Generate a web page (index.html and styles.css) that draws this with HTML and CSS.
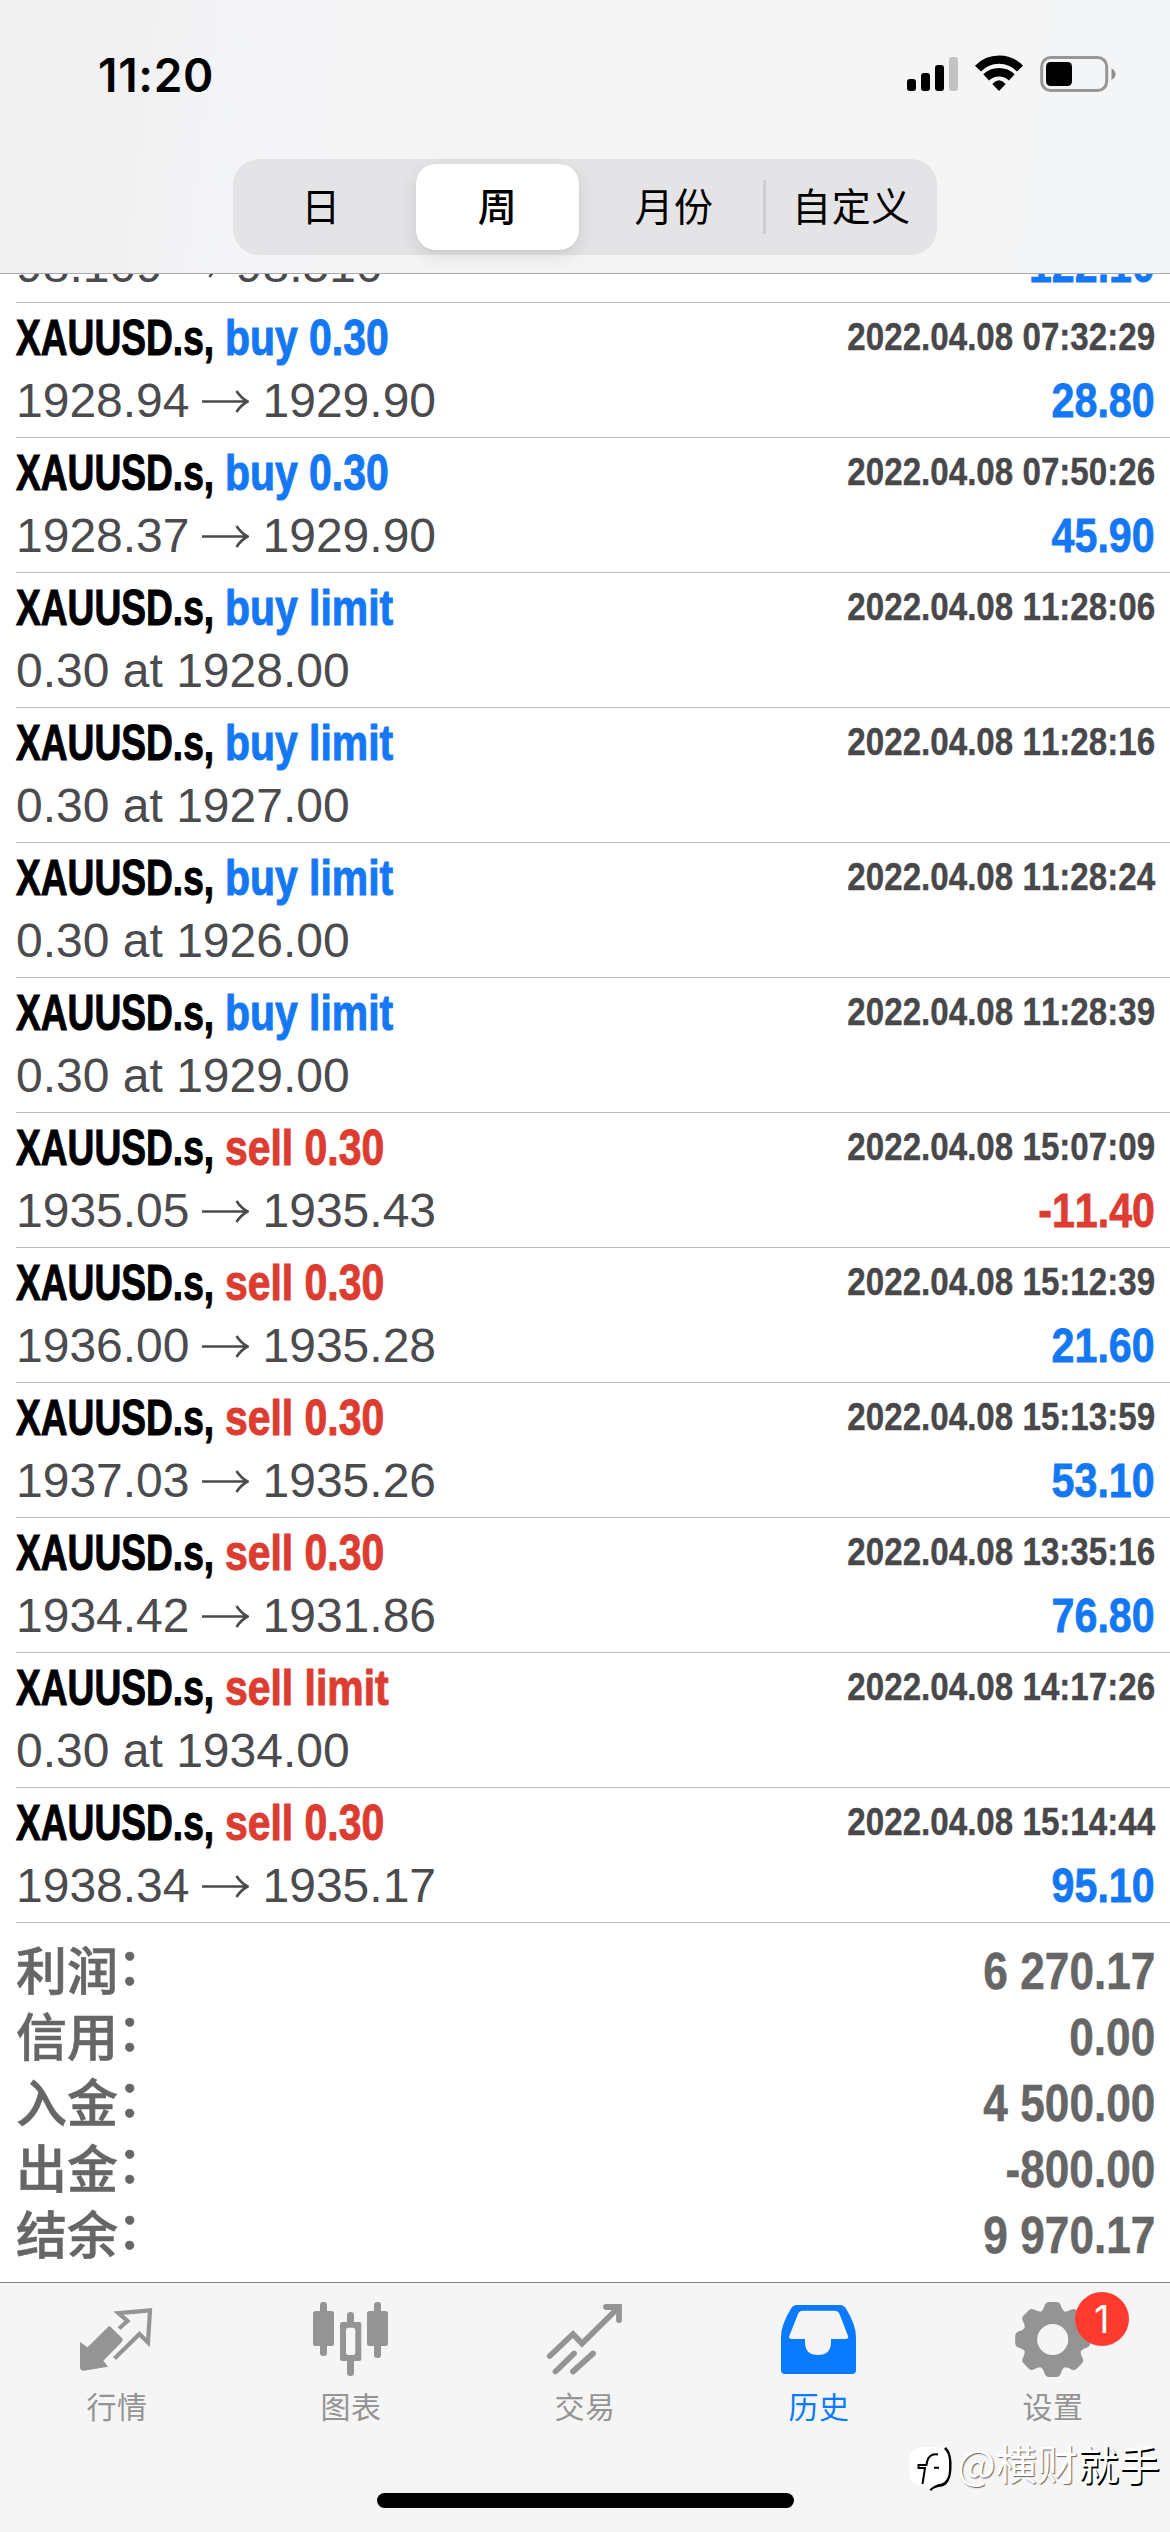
FILE: index.html
```html
<!DOCTYPE html>
<html lang="zh-CN">
<head>
<meta charset="utf-8">
<title>历史</title>
<link rel="stylesheet" href="styles.css">
</head>
<body>
<svg width="0" height="0" class="defs" aria-hidden="true">
  <symbol id="arrow" viewBox="0 0 47 30">
    <path d="M0 15.5H45M34.5 5Q39 12 45.5 15.5Q39 19 34.5 26" fill="none" stroke="currentColor" stroke-width="2.6"/>
  </symbol>
</svg>
<div class="screen">
  <header class="header">
    <div class="status">
      <span class="time">11:20</span>
      <svg class="status-icons" width="180" height="50" viewBox="940 50 180 50">
        <g>
          <rect x="907" y="79" width="9" height="12" rx="3"/>
          <rect x="921" y="73" width="9" height="18" rx="3"/>
          <rect x="935" y="65" width="9" height="26" rx="3"/>
          <rect x="949" y="57" width="9" height="34" rx="3" fill="#c3c3c4"/>
        </g>
        <g fill="none" stroke="#000" stroke-width="8.4">
          <path d="M978 68.6A29 29 0 0 1 1020 68.6"/>
          <path d="M986.2 77.4A18.5 18.5 0 0 1 1011.8 77.4"/>
        </g>
        <path d="M992.3 84Q999 76.6 1005.7 84L999 91Z"/>
        <rect x="1041.7" y="57.5" width="65" height="33" rx="9" fill="none" stroke="#979797" stroke-width="3"/>
        <rect x="1046" y="62" width="26" height="24" rx="4.5"/>
        <path d="M1111.5 68.5Q1115.5 70.5 1115.5 74.3Q1115.5 78 1111.5 80Z" fill="#8e8e8e"/>
      </svg>
    </div>
    <div class="segmented">
      <span class="segment">日</span>
      <span class="segment selected">周</span>
      <span class="segment">月份</span>
      <span class="segment divided">自定义</span>
    </div>
  </header>

  <main class="content">
    <ul class="deals">
      <li class="deal partial"><div class="line"><span class="symbol">XAUUSD.s,</span><span class="action buy">buy 0.30</span></div><div class="line second"><span class="price">98.109<svg class="arrow"><use href="#arrow"/></svg>98.510</span><span class="profit">122.10</span></div></li>
      <li class="deal"><div class="line"><span class="symbol">XAUUSD.s,</span><span class="action buy">buy 0.30</span><time>2022.04.08 07:32:29</time></div><div class="line second"><span class="price">1928.94<svg class="arrow"><use href="#arrow"/></svg>1929.90</span><span class="profit">28.80</span></div></li>
      <li class="deal"><div class="line"><span class="symbol">XAUUSD.s,</span><span class="action buy">buy 0.30</span><time>2022.04.08 07:50:26</time></div><div class="line second"><span class="price">1928.37<svg class="arrow"><use href="#arrow"/></svg>1929.90</span><span class="profit">45.90</span></div></li>
      <li class="deal"><div class="line"><span class="symbol">XAUUSD.s,</span><span class="action buy">buy limit</span><time>2022.04.08 11:28:06</time></div><div class="line second"><span class="price">0.30 at 1928.00</span></div></li>
      <li class="deal"><div class="line"><span class="symbol">XAUUSD.s,</span><span class="action buy">buy limit</span><time>2022.04.08 11:28:16</time></div><div class="line second"><span class="price">0.30 at 1927.00</span></div></li>
      <li class="deal"><div class="line"><span class="symbol">XAUUSD.s,</span><span class="action buy">buy limit</span><time>2022.04.08 11:28:24</time></div><div class="line second"><span class="price">0.30 at 1926.00</span></div></li>
      <li class="deal"><div class="line"><span class="symbol">XAUUSD.s,</span><span class="action buy">buy limit</span><time>2022.04.08 11:28:39</time></div><div class="line second"><span class="price">0.30 at 1929.00</span></div></li>
      <li class="deal"><div class="line"><span class="symbol">XAUUSD.s,</span><span class="action sell">sell 0.30</span><time>2022.04.08 15:07:09</time></div><div class="line second"><span class="price">1935.05<svg class="arrow"><use href="#arrow"/></svg>1935.43</span><span class="profit loss">-11.40</span></div></li>
      <li class="deal"><div class="line"><span class="symbol">XAUUSD.s,</span><span class="action sell">sell 0.30</span><time>2022.04.08 15:12:39</time></div><div class="line second"><span class="price">1936.00<svg class="arrow"><use href="#arrow"/></svg>1935.28</span><span class="profit">21.60</span></div></li>
      <li class="deal"><div class="line"><span class="symbol">XAUUSD.s,</span><span class="action sell">sell 0.30</span><time>2022.04.08 15:13:59</time></div><div class="line second"><span class="price">1937.03<svg class="arrow"><use href="#arrow"/></svg>1935.26</span><span class="profit">53.10</span></div></li>
      <li class="deal"><div class="line"><span class="symbol">XAUUSD.s,</span><span class="action sell">sell 0.30</span><time>2022.04.08 13:35:16</time></div><div class="line second"><span class="price">1934.42<svg class="arrow"><use href="#arrow"/></svg>1931.86</span><span class="profit">76.80</span></div></li>
      <li class="deal"><div class="line"><span class="symbol">XAUUSD.s,</span><span class="action sell">sell limit</span><time>2022.04.08 14:17:26</time></div><div class="line second"><span class="price">0.30 at 1934.00</span></div></li>
      <li class="deal"><div class="line"><span class="symbol">XAUUSD.s,</span><span class="action sell">sell 0.30</span><time>2022.04.08 15:14:44</time></div><div class="line second"><span class="price">1938.34<svg class="arrow"><use href="#arrow"/></svg>1935.17</span><span class="profit">95.10</span></div></li>
    </ul>
    <dl class="summary">
      <div class="total"><dt>利润<i>：</i></dt><dd>6 270.17</dd></div>
      <div class="total"><dt>信用<i>：</i></dt><dd>0.00</dd></div>
      <div class="total"><dt>入金<i>：</i></dt><dd>4 500.00</dd></div>
      <div class="total"><dt>出金<i>：</i></dt><dd>-800.00</dd></div>
      <div class="total"><dt>结余<i>：</i></dt><dd>9 970.17</dd></div>
    </dl>
  </main>

  <footer class="footer">
    <nav class="tabs">
      <a class="tab">
        <svg width="80" height="80" viewBox="0 0 80 80">
          <path d="M3 42L10.5 47.3L30.8 27.2Q32.3 25.5 34 27.2L45 38Q46.5 40 45 41.8L26.3 60.7L31 66.7L7 70.7Q3 71 3 67Z" fill="currentColor"/>
          <path d="M42 28.5L50.5 21L41.5 13.2L73 10.3L71 42.5L62.5 34L37.5 58.5" fill="none" stroke="currentColor" stroke-width="4.2" stroke-linejoin="miter"/>
        </svg>
        <span>行情</span>
      </a>
      <a class="tab">
        <svg width="80" height="80" viewBox="0 0 80 80" fill="currentColor">
          <rect x="2" y="11" width="21" height="35" rx="2.5"/><rect x="9" y="2" width="7" height="54" rx="3"/>
          <path fill-rule="evenodd" d="M31 22H48.3Q50.3 22 50.3 24V59Q50.3 61 48.3 61H31Q29 61 29 59V24Q29 22 31 22ZM37.5 27.7Q35 27.7 35 30.5V52.5Q35 55 37.5 55H42Q44.3 55 44.3 52.5V30.5Q44.3 27.7 42 27.7Z"/>
          <path d="M36 24V15Q36 12 39.5 12Q43 12 43 15V24ZM36 59V73Q36 76 39.5 76Q43 76 43 73V59Z"/>
          <rect x="56" y="11" width="21" height="35" rx="2.5"/><rect x="63" y="2" width="7" height="56" rx="3"/>
        </svg>
        <span>图表</span>
      </a>
      <a class="tab">
        <svg width="80" height="80" viewBox="0 0 80 80" fill="none" stroke="currentColor" stroke-width="5.8" stroke-linecap="round">
          <path d="M4.8 56L28 34L37 43.5L72 9"/>
          <path d="M61 7H74V20"/>
          <path d="M10.5 71.5L29 53.5M28 71.5L48 53.5"/>
        </svg>
        <span>交易</span>
      </a>
      <a class="tab active">
        <svg width="80" height="80" viewBox="0 0 80 80" fill="currentColor">
          <path fill-rule="evenodd" d="M18 5H61Q65 5 67 8.500Q77 25 77 37V70Q77 74 73 74H6Q2 74 2 70V37Q2 25 12 8.500Q14 5 18 5ZM24 10.700Q20.500 10.700 19 14L10.300 36Q9.300 39 12.500 39H26V42Q26 55 39 55Q52 55 52 42V39H66.500Q70 39 69 36L60.500 14Q59 10.700 55.500 10.700Z"/>
        </svg>
        <span>历史</span>
      </a>
      <a class="tab">
        <svg width="80" height="80" viewBox="0 0 80 80">
          <defs><path id="tooth" d="M27.700 12Q30.500 10 31.800 5Q33 2 36 2H43.500Q46.500 2 47.600 5Q49 10 51.700 12L46 22H33Z"/></defs>
          <g fill="currentColor">
            <use href="#tooth"/><use href="#tooth" transform="rotate(45 39.7 39.5)"/><use href="#tooth" transform="rotate(90 39.7 39.5)"/><use href="#tooth" transform="rotate(135 39.7 39.5)"/><use href="#tooth" transform="rotate(180 39.7 39.5)"/><use href="#tooth" transform="rotate(225 39.7 39.5)"/><use href="#tooth" transform="rotate(270 39.7 39.5)"/><use href="#tooth" transform="rotate(315 39.7 39.5)"/>
          </g>
          <circle cx="39.7" cy="39.5" r="22.3" fill="none" stroke="currentColor" stroke-width="13.5"/>
        </svg>
        <b class="badge">1</b>
        <span>设置</span>
      </a>
    </nav>
    <div class="home-indicator"></div>
    <div class="watermark">
      <svg width="48" height="52" viewBox="0 0 48 52">
        <path d="M36 4Q42 10 41 25Q40 39 33 41Q24 42 21 46" fill="none" stroke="#000" stroke-width="3"/>
        <path d="M14 3H27Q40 3 40 18V26Q40 38 31 39.5Q25 41 20 46L19 41.5H14Q0 41.5 0 27V17Q0 3 14 3Z" fill="#fff"/>
        <path d="M29 10.5Q20 9 18 18L17.5 21H9.5V24H16L13.5 40M25 23.8H30" fill="none" stroke="#000" stroke-width="2"/>
      </svg>
      <span class="handle">@横财<b>就手</b></span>
    </div>
  </footer>
</div>
</body>
</html>
```
FILE: styles.css
```css
* { box-sizing: border-box; }

body {
  margin: 0;
  background: #fff;
  font-family: "Liberation Sans", "Noto Sans CJK SC", sans-serif;
  font-kerning: none;
}

ul, dl, dd { margin: 0; padding: 0; list-style: none; }

.defs { position: absolute; }

.screen {
  width: 1170px;
  height: 2532px;
  display: flex;
  flex-direction: column;
  overflow: hidden;
}

/* Header */
.header {
  height: 274px;
  flex: none;
  border-bottom: 1px solid #a9a9ab;
  background: linear-gradient(97deg, #f1f1f3 0, #f1f1f2 12%, #f3f4f6 20%, #f5f5f5 45%, #f5f5f5 75%, #f3f5f7 100%);
}

.status {
  height: 159px;
  padding: 50px 50px 0 98px;
  display: flex;
  justify-content: space-between;
  align-items: flex-start;
}

.time {
  font: 600 46px/50px Inter, sans-serif;
  letter-spacing: .7px;
}

.status-icons { overflow: visible; }

.segmented {
  width: 704px;
  height: 96px;
  margin-left: 233px;
  padding: 5px 0;
  border-radius: 26px;
  background: #e4e4e6;
  display: grid;
  grid-template-columns: 176px 176px 178px 174px;
}

.segment {
  display: flex;
  align-items: center;
  justify-content: center;
  padding-bottom: 6px;
  font: 400 39px/60px "Noto Sans CJK SC", sans-serif;
  letter-spacing: .6px;
}

.segment.selected {
  margin: 0 6px 0 7px;
  border-radius: 20px;
  background: #fff;
  font-weight: 500;
  box-shadow: 0 6px 20px rgba(0, 0, 0, .1), 0 2px 3px rgba(0, 0, 0, .04);
}

.segment.divided {
  padding-left: 3px;
  background: linear-gradient(#cfcfd1, #cfcfd1) 0 50% / 3px 54px no-repeat;
}

/* History list */
.content {
  flex: 1;
  min-height: 0;
  overflow: hidden;
}

.deal {
  height: 135px;
  margin-left: 16px;
  padding: 5px 15px 0 0;
  border-bottom: 1px solid #bdbdbf;
}

.deal.partial { margin-top: -106px; }

.line {
  height: 60px;
  display: flex;
  white-space: nowrap;
  line-height: 60px;
}

.line.second { margin-top: 3px; }

.symbol, .action {
  font-size: 50px;
  font-weight: 700;
  transform-origin: 0 50%;
  -webkit-text-stroke: 1px currentColor;
}

.symbol {
  width: 209px;
  transform: scaleX(.743);
}

.action {
  width: 170px;
  transform: scaleX(.818);
}

.buy { color: #1478f5; }
.sell { color: #dd3c31; }

time, .profit {
  margin-left: auto;
  font-weight: 700;
  transform-origin: 100% 50%;
}

time {
  color: #48484a;
  font-size: 39px;
  line-height: 58px;
  transform: scaleX(.85);
  -webkit-text-stroke: .4px currentColor;
}

.price {
  color: #4b4b4e;
  font-size: 48px;
}

.arrow {
  width: 47px;
  height: 30px;
  margin: 0 14px 0 12px;
  vertical-align: 1px;
}

.profit {
  color: #1478f5;
  font-size: 49px;
  line-height: 59px;
  transform: scaleX(.84);
  -webkit-text-stroke: .8px currentColor;
}

.profit.loss { color: #dd3c31; }

/* Totals */
.summary { padding: 15px 15px 0 16px; }

.total {
  height: 66px;
  display: flex;
  justify-content: space-between;
  color: #666;
}

.total dt {
  font: 500 51px/61px "Noto Sans CJK SC", sans-serif;
  -webkit-text-stroke: .6px currentColor;
}

.total dt i {
  position: relative;
  top: -5px;
  left: -1px;
  font-style: normal;
}

.total dd {
  font-size: 52px;
  font-weight: 700;
  line-height: 66px;
  transform: scaleX(.85);
  transform-origin: 100% 50%;
  -webkit-text-stroke: .5px currentColor;
}

/* Tab bar */
.footer {
  position: relative;
  flex: none;
  height: 250px;
  border-top: 1px solid #858587;
  background: #f5f5f5;
}

.tabs {
  height: 210px;
  padding-top: 17px;
  display: grid;
  grid-template-columns: repeat(5, 1fr);
}

.tab {
  position: relative;
  display: flex;
  flex-direction: column;
  align-items: center;
  gap: 5px;
  color: #949494;
  font: 400 30px/40px "Noto Sans CJK SC", sans-serif;
  letter-spacing: .6px;
}

.tab.active { color: #0a7aff; }

.badge {
  position: absolute;
  left: 139px;
  top: -8px;
  width: 54px;
  height: 54px;
  border-radius: 50%;
  background: #ff3b30;
  color: #fff;
  font: 400 38px/54px Inter, sans-serif;
  text-align: center;
}

.home-indicator {
  width: 417px;
  height: 15px;
  margin: 0 auto;
  border-radius: 8px;
  background: #000;
}

.watermark {
  position: absolute;
  left: 909px;
  top: 161px;
  display: flex;
  color: #fff;
}

.handle {
  font: 400 41px/36px "Noto Sans CJK SC", sans-serif;
  text-shadow: 1px 1px 1px #666;
  white-space: nowrap;
}

.handle b {
  font-weight: 400;
  text-shadow: 1.5px 1.5px 0 #000;
}
```
